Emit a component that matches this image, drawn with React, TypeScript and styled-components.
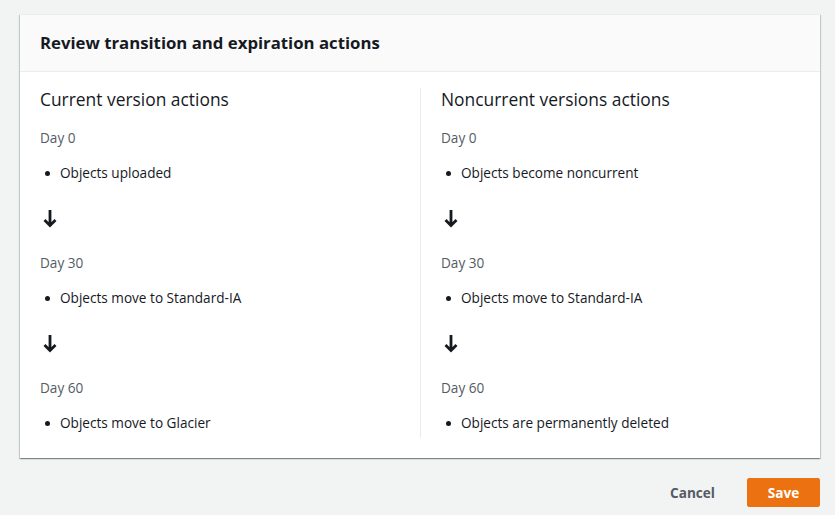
import React from "react";
import styled, { createGlobalStyle } from "styled-components";

const Global = createGlobalStyle`
  html, body { margin: 0; padding: 0; background: #f2f3f3; }
  body { font-family: "Open Sans", "Noto Sans", Arial, sans-serif; color: #16191f; }
  * { box-sizing: border-box; }
`;

const Page = styled.div`
  padding: 14px 15px 0 20px;
  width: 835px;
  height: 515px;
`;

const Card = styled.section`
  background: #fff;
  border-top: 1px solid #eaeded;
  box-shadow: 0 1px 1px 0 rgba(0, 28, 36, 0.3), 1px 1px 1px 0 rgba(0, 28, 36, 0.15),
    -1px 1px 1px 0 rgba(0, 28, 36, 0.15);
`;

const Header = styled.header`
  background: #fafafa;
  border-bottom: 1px solid #eaeded;
  height: 57px;
  display: flex;
  align-items: center;
  padding: 0 20px;
`;

const Title = styled.h2`
  margin: 0;
  font-size: 16.75px;
  font-weight: 700;
  line-height: 22px;
`;

const Body = styled.div`
  display: grid;
  grid-template-columns: 380px 380px;
  padding: 16px 20px 20px;
`;

const Column = styled.div<{ $divider?: boolean }>`
  display: flex;
  flex-direction: column;
  padding: 0 5px 5px 0;
  ${(p) => (p.$divider ? "border-left: 1px solid #eaeded; padding-left: 20px;" : "")}
`;

const ColumnTitle = styled.h3`
  margin: 0 0 18px;
  font-size: 17.4px;
  font-weight: 400;
  line-height: 22px;
`;

const DayLabel = styled.div`
  font-size: 13.6px;
  line-height: 20px;
  color: #545b64;
`;

const List = styled.ul`
  list-style: none;
  margin: 15px 0 0;
  padding: 0;
`;

const Item = styled.li`
  position: relative;
  font-size: 13.6px;
  line-height: 20px;
  padding-left: 20px;
  &::before {
    content: "";
    position: absolute;
    left: 5px;
    top: 8px;
    width: 5px;
    height: 5px;
    border-radius: 50%;
    background: #16191f;
  }
`;

const ArrowWrap = styled.div`
  height: 20px;
  margin: 25px 0;
  display: flex;
  align-items: center;
  padding-left: 3px;
`;

const Footer = styled.div`
  display: flex;
  justify-content: flex-end;
  align-items: center;
  gap: 12px;
  margin-top: 20px;
`;

const TextButton = styled.button`
  background: none;
  border: none;
  font-family: inherit;
  font-size: 13.6px;
  font-weight: 700;
  color: #545b64;
  padding: 4px 20px;
  height: 29px;
`;

const PrimaryButton = styled.button`
  background: #ec7211;
  border: 1px solid #ec7211;
  border-radius: 2px;
  font-family: inherit;
  font-size: 13.6px;
  font-weight: 700;
  color: #fff;
  height: 29px;
  width: 73px;
`;

const Arrow = () => (
  <ArrowWrap>
    <svg width="14" height="19" viewBox="0 0 14 19">
      <path
        d="M7 1V16.5M1.5 11L7 16.5L12.5 11"
        fill="none"
        stroke="#16191f"
        strokeWidth="2.8"
      />
    </svg>
  </ArrowWrap>
);

type Stage = { day: string; text: string };

const current: Stage[] = [
  { day: "Day 0", text: "Objects uploaded" },
  { day: "Day 30", text: "Objects move to Standard-IA" },
  { day: "Day 60", text: "Objects move to Glacier" },
];

const noncurrent: Stage[] = [
  { day: "Day 0", text: "Objects become noncurrent" },
  { day: "Day 30", text: "Objects move to Standard-IA" },
  { day: "Day 60", text: "Objects are permanently deleted" },
];

const Timeline = ({ stages }: { stages: Stage[] }) => (
  <>
    {stages.map((s, i) => (
      <React.Fragment key={i}>
        {i > 0 && <Arrow />}
        <DayLabel>{s.day}</DayLabel>
        <List>
          <Item>{s.text}</Item>
        </List>
      </React.Fragment>
    ))}
  </>
);

export default function App() {
  return (
    <Page>
      <Global />
      <Card>
        <Header>
          <Title>Review transition and expiration actions</Title>
        </Header>
        <Body>
          <Column>
            <ColumnTitle>Current version actions</ColumnTitle>
            <Timeline stages={current} />
          </Column>
          <Column $divider>
            <ColumnTitle>Noncurrent versions actions</ColumnTitle>
            <Timeline stages={noncurrent} />
          </Column>
        </Body>
      </Card>
      <Footer>
        <TextButton>Cancel</TextButton>
        <PrimaryButton>Save</PrimaryButton>
      </Footer>
    </Page>
  );
}
